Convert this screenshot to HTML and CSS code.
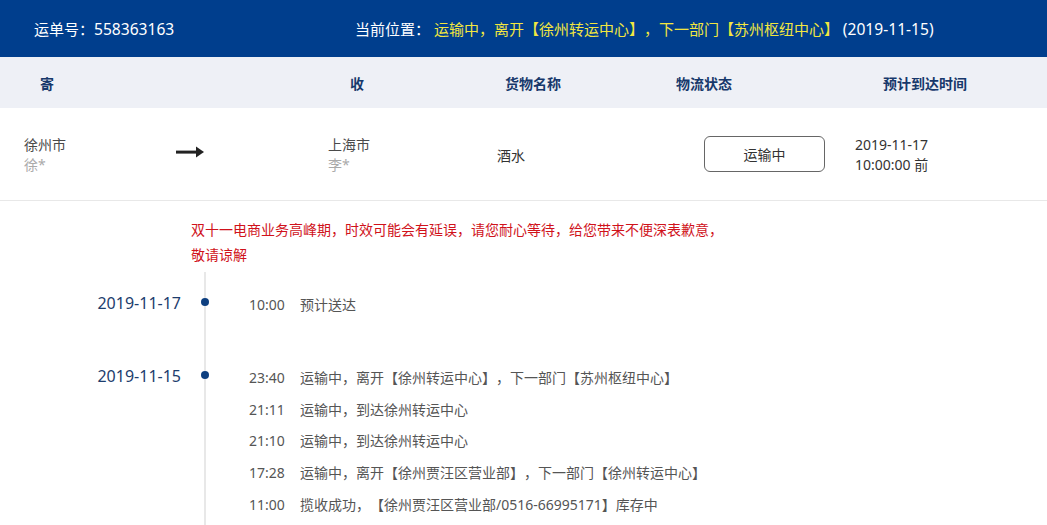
FILE: index.html
```html
<!DOCTYPE html>
<html lang="zh-CN">
<head>
<meta charset="utf-8">
<title>运单查询</title>
<link rel="stylesheet" href="styles.css">
</head>
<body>
<div class="topbar">
  <span class="waybill">运单号：<span class="num">558363163</span></span>
  <span class="current">当前位置： <span class="hl">运输中，离开【徐州转运中心】，下一部门【苏州枢纽中心】</span> <span class="num">(2019-11-15)</span></span>
</div>
<div class="thead">
  <div>寄</div>
  <div>收</div>
  <div>货物名称</div>
  <div>物流状态</div>
  <div>预计到达时间</div>
</div>
<div class="trow">
  <div class="party"><div class="city">徐州市</div><div class="name">徐*</div></div>
  <div class="arrow">
    <svg width="28" height="12" viewBox="0 0 28 12"><rect x="0" y="4.6" width="21" height="3" fill="#222"/><polygon points="20,0.5 28,6.1 20,11.5" fill="#222"/></svg>
  </div>
  <div class="party"><div class="city">上海市</div><div class="name">李*</div></div>
  <div class="goods">酒水</div>
  <div class="status"><span class="badge">运输中</span></div>
  <div class="eta">2019-11-17<br>10:00:00 前</div>
</div>
<div class="notice">双十一电商业务高峰期，时效可能会有延误，请您耐心等待，给您带来不便深表歉意，<br>敬请谅解</div>
<div class="timeline">
  <div class="group first">
    <div class="date">2019-11-17</div>
    <div class="axis"><span class="dot"></span></div>
    <div class="events">
      <div class="ev"><span class="time">10:00</span><span class="msg">预计送达</span></div>
    </div>
  </div>
  <div class="group">
    <div class="date">2019-11-15</div>
    <div class="axis"><span class="dot"></span></div>
    <div class="events">
      <div class="ev"><span class="time">23:40</span><span class="msg">运输中，离开【徐州转运中心】，下一部门【苏州枢纽中心】</span></div>
      <div class="ev"><span class="time">21:11</span><span class="msg">运输中，到达徐州转运中心</span></div>
      <div class="ev"><span class="time">21:10</span><span class="msg">运输中，到达徐州转运中心</span></div>
      <div class="ev"><span class="time">17:28</span><span class="msg">运输中，离开【徐州贾汪区营业部】，下一部门【徐州转运中心】</span></div>
      <div class="ev"><span class="time">11:00</span><span class="msg">揽收成功，【徐州贾汪区营业部/0516-66995171】库存中</span></div>
    </div>
  </div>
</div>
</body>
</html>
```

FILE: styles.css
```css
* { box-sizing: border-box; }
html, body { margin: 0; padding: 0; background: #fff; }
body {
  font-family: "Noto Sans", "Noto Sans CJK SC", sans-serif;
  font-size: 14px;
  color: #333;
  overflow: hidden;
  text-spacing-trim: space-all;
}
.topbar {
  height: 57px;
  background: #003e8d;
  color: #fff;
  font-size: 15px;
  display: flex;
  align-items: center;
  padding-left: 34px;
}
.topbar .num { font-size: 15.6px; }
.waybill { width: 321px; }
.hl { color: #f2e640; }
.thead {
  height: 51px;
  background: #eef0f6;
  display: grid;
  grid-template-columns: 310px 155px 171px 207px 1fr;
  align-items: center;
  padding-left: 40px;
  font-weight: bold;
  color: #17386b;
  font-size: 14px;
}
.trow {
  height: 93px;
  border-bottom: 1px solid #e8e8e8;
  display: grid;
  grid-template-columns: 152px 152px 169px 207px 151px 1fr;
  align-items: center;
  padding-left: 24px;
}
.party { margin-top: 2px; }
.city { line-height: 20px; color: #4a4a4a; }
.name { line-height: 20px; color: #aaa; }
.arrow svg { display: block; margin-top: -4px; }
.goods { color: #333; margin-top: 2px; }
.badge {
  display: flex;
  width: 121px;
  height: 36px;
  border: 1px solid #666;
  border-radius: 6px;
  align-items: center;
  justify-content: center;
  color: #333;
}
.eta { line-height: 20px; color: #333; margin-top: 1px; }
.notice {
  color: #d0121b;
  padding: 16px 0 0 191px;
  line-height: 25px;
  height: 71px;
}
.group {
  display: grid;
  grid-template-columns: 181px 68px 1fr;
  padding: 17px 0 24px;
  background: linear-gradient(#e8e8e8, #e8e8e8) no-repeat 204px 0 / 2px 100%;
}
.date {
  text-align: right;
  color: #1d3d6d;
  font-size: 16px;
  line-height: 28px;
}
.axis { position: relative; }
.dot {
  position: absolute;
  left: 20px;
  top: 9px;
  width: 8px;
  height: 8px;
  border-radius: 50%;
  background: #0d3f80;
}
.ev {
  line-height: 31.8px;
  height: 31.8px;
  color: #555;
  white-space: nowrap;
}
.time { display: inline-block; width: 51px; color: #555; }
.msg { color: #555; }
```
